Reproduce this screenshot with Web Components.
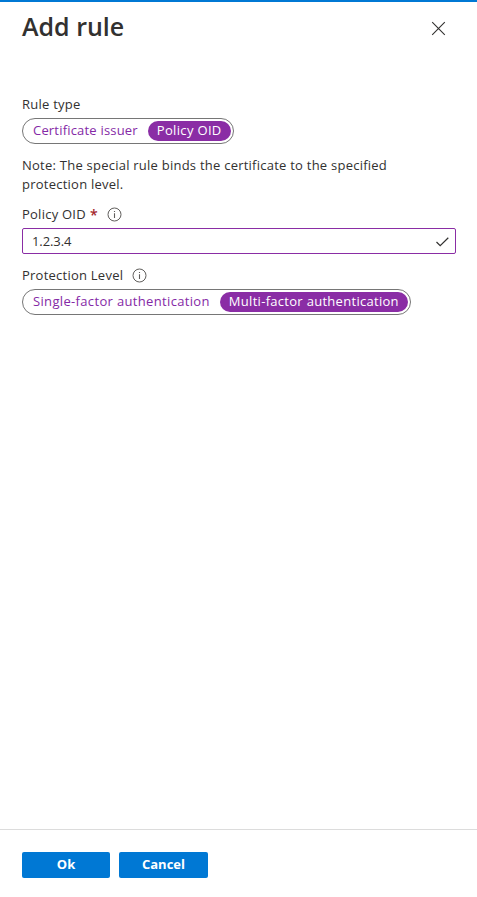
<!DOCTYPE html>
<html lang="en"><head><meta charset="utf-8"><title>Add rule</title>
<style>html,body{margin:0;height:100%;background:#fff}body{font:13px/19px "Open Sans","Noto Sans",sans-serif;color:#323130;letter-spacing:.24px}
.note{margin:12px 0 11px;white-space:nowrap}</style></head><body>
<rule-panel heading="Add rule">
<form-label>Rule type</form-label>
<pill-group><pill-option style="--ls:.19px">Certificate issuer</pill-option><pill-option active style="--ls:.33px">Policy OID</pill-option></pill-group>
<div class="note">Note: The special rule binds the certificate to the specified<br>protection level.</div>
<form-label required info>Policy OID</form-label>
<valid-field>1.2.3.4</valid-field>
<form-label info style="margin-top:12px">Protection Level</form-label>
<pill-group><pill-option style="--ls:.34px">Single-factor authentication</pill-option><pill-option active style="--ls:.29px">Multi-factor authentication</pill-option></pill-group>
<action-button slot="actions">Ok</action-button><action-button slot="actions" style="width:89px">Cancel</action-button>
</rule-panel>
<script>
const define=(name,html,setup)=>customElements.define(name,class extends HTMLElement{
  connectedCallback(){if(this.shadowRoot)return;this.attachShadow({mode:'open'}).innerHTML=html;if(setup)setup(this,this.shadowRoot)}
});
define('rule-panel',`<style>
:host{display:flex;flex-direction:column;height:100%;box-sizing:border-box;border-top:2px solid #0078d4}
header{display:flex;justify-content:space-between;padding:7px 31px 0 22px;height:84px;box-sizing:border-box}
h1{margin:0;font-size:25px;line-height:34px;font-weight:600;letter-spacing:0}
svg{margin-top:12px;display:block}
main{flex:1;padding:9px 21px 0 22px}
footer{display:flex;gap:9px;border-top:1px solid #dcdcdc;height:68px;box-sizing:border-box;padding:22px 22px 0}
</style><header><h1></h1><svg width="15" height="15" viewBox="0 0 15 15"><path d="M1.2 1.2 13.8 13.8M13.8 1.2 1.2 13.8" fill="none" stroke="#323130" stroke-width="1.1"/></svg></header>
<main><slot></slot></main><footer><slot name="actions"></slot></footer>`,(e,r)=>r.querySelector('h1').textContent=e.getAttribute('heading'));
define('form-label',`<style>:host{display:flex;align-items:center;height:19px;margin-bottom:4px}
.req{color:#a4262c;font-size:14px;margin-left:4px;font-weight:600;line-height:19px}svg{margin-left:9px}
.req,svg{display:none}:host([required]) .req,:host([info]) svg{display:block}</style>
<span><slot></slot></span><span class="req">*</span><svg width="15" height="15" viewBox="0 0 15 15"><circle cx="7.5" cy="7.5" r="6.5" fill="none" stroke="#605e5c"/><path d="M7.5 6.2V11M7.5 4V5.1" stroke="#605e5c" stroke-width="1.1"/></svg>`);
define('pill-group',`<style>:host{display:flex;width:max-content;height:26px;box-sizing:border-box;border:1px solid #767676;border-radius:13px;padding:2px 2px 2px 1px}</style><slot></slot>`);
define('pill-option',`<style>:host{display:block;height:20px;line-height:19px;padding:0 9px;border-radius:10px;color:#8529a6;white-space:nowrap;margin-right:1px;letter-spacing:var(--ls,.24px)}
:host([active]){background:#8a2da5;color:#fff;font-weight:500;margin-right:0}</style><slot></slot>`);
define('valid-field',`<style>:host{display:flex;justify-content:space-between;align-items:center;height:26px;box-sizing:border-box;border:1px solid #8a2da5;border-radius:2px;padding:0 5px 0 9px;letter-spacing:-.1px;line-height:24px}
span{margin-top:-1px}svg{margin-top:1px}</style>
<span><slot></slot></span><svg width="15" height="12" viewBox="0 0 15 12"><path d="M1.5 6 5.2 9.7 13.3 1.7" fill="none" stroke="#323130" stroke-width="1.2"/></svg>`);
define('action-button',`<style>:host{display:block;width:88px;height:26px;line-height:25px;background:#0078d4;border-radius:2px;color:#fff;text-align:center;font-weight:700;letter-spacing:0}</style><slot></slot>`);
</script></body></html>
